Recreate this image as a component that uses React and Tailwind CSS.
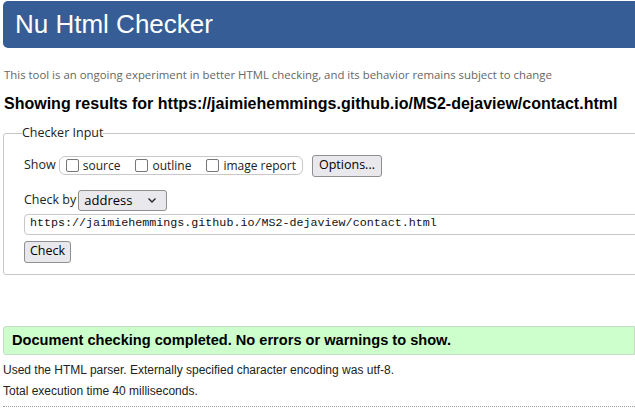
import React from 'react';

const arial = { fontFamily: '"Liberation Sans", Arial, sans-serif' };

const Box = ({ label }) => (
  <label className="flex items-center gap-[4px] whitespace-nowrap">
    <span className="w-[13px] h-[13px] border border-[#767676] rounded-[2px] bg-white"></span>
    <span>{label}</span>
  </label>
);

export default function App() {
  return (
    <div className="w-[635px] h-[420px] overflow-hidden bg-white text-black">
      <h1 className="ml-[3px] mt-[1px] h-[47px] bg-[#365d95] text-white rounded-l-[5px] pl-[12px] text-[26px] leading-[47px] whitespace-nowrap font-['Liberation_Sans',Arial,sans-serif]">
        Nu Html Checker
      </h1>

      <p className="mt-[19px] ml-[4px] text-[11.4px] text-[#666] font-['Open_Sans','Noto_Sans',sans-serif] whitespace-nowrap leading-[16px]">
        This tool is an ongoing experiment in better HTML checking, and its behavior remains subject to change
      </p>

      <h2 className="mt-[11px] ml-[4px] text-[16px] font-bold whitespace-nowrap leading-[20px] font-['Liberation_Sans',Arial,sans-serif]">
        Showing results for https://jaimiehemmings.github.io/MS2-dejaview/contact.html
      </h2>

      <fieldset className="mt-[10px] ml-[3px] w-[700px] h-[151px] border border-[#c8c8c8] rounded-[3px] pl-[20px] pr-0 pb-0 text-[12px] font-['Open_Sans','Noto_Sans',sans-serif]">
        <legend className="ml-[-2px] px-0 text-[12.5px] text-[#222]">Checker Input</legend>

        <div className="flex items-center mt-[12px] h-[22px]">
          <span className="mr-[3px] text-[#222] text-[12.5px]">Show</span>
          <div className="flex items-center h-[19px] border border-[#c8c8c8] rounded-[6px] pl-[6px] pr-[6px] gap-[15px] text-[#222] whitespace-nowrap">
            <Box label="source" />
            <Box label="outline" />
            <Box label="image report" />
          </div>
          <button className="ml-[9px] h-[22px] px-[6px] border border-[#8f8f8f] rounded-[3px] bg-[#e9e9ed] text-[12.5px] text-black whitespace-nowrap">
            Options...
          </button>
        </div>

        <div className="flex items-center mt-[13px] h-[21px]">
          <span className="mr-[2px] text-[#222] text-[12.5px]">Check by</span>
          <div className="flex items-center justify-between w-[89px] h-[21px] border border-[#8f8f8f] rounded-[3px] bg-[#e9e9ed] pl-[5px] pr-[10px] text-[13px]">
            <span>address</span>
            <svg width="8" height="5" viewBox="0 0 8 5"><path d="M0.5 0.5 L4 4 L7.5 0.5" fill="none" stroke="#222" strokeWidth="1.3" /></svg>
          </div>
        </div>

        <div className="mt-[3px] h-[21px] border border-[#c8c8c8] rounded-l-[4px] flex items-center pl-[5px] text-[11.7px] font-['Liberation_Mono','DejaVu_Sans_Mono',monospace] text-[#111] whitespace-nowrap">
          https://jaimiehemmings.github.io/MS2-dejaview/contact.html
        </div>

        <button className="mt-[6px] h-[22px] px-[5px] border border-[#8f8f8f] rounded-[3px] bg-[#e9e9ed] text-[12.5px] text-black">
          Check
        </button>
      </fieldset>

      <div className="mt-[51px] ml-[3px] h-[29px] bg-[#ccffcc] border border-[#c6d9c6] rounded-l-[3px] flex items-center pl-[8px] text-[14.6px] font-bold whitespace-nowrap" style={arial}>
        Document checking completed. No errors or warnings to show.
      </div>

      <div className="ml-[3px] text-[12px] text-[#222] leading-[21px] mt-[5px]" style={arial}>
        <p>Used the HTML parser. Externally specified character encoding was utf-8.</p>
        <p>Total execution time 40 milliseconds.</p>
      </div>
      <div className="mt-[4px] ml-[3px] border-t border-dotted border-[#999]"></div>
    </div>
  );
}
